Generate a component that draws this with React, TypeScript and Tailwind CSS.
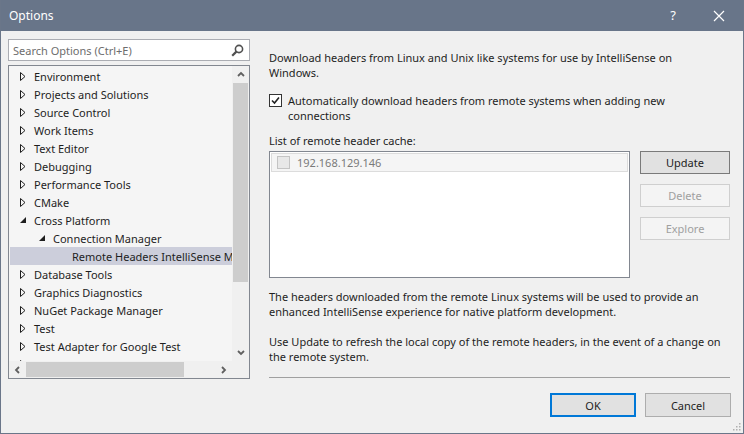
import React from 'react';

const font = "font-['Noto_Sans',sans-serif]";

type Node = { label: string; level: number; state: 'closed' | 'open' | 'leaf'; selected?: boolean };

const nodes: Node[] = [
  { label: 'Environment', level: 0, state: 'closed' },
  { label: 'Projects and Solutions', level: 0, state: 'closed' },
  { label: 'Source Control', level: 0, state: 'closed' },
  { label: 'Work Items', level: 0, state: 'closed' },
  { label: 'Text Editor', level: 0, state: 'closed' },
  { label: 'Debugging', level: 0, state: 'closed' },
  { label: 'Performance Tools', level: 0, state: 'closed' },
  { label: 'CMake', level: 0, state: 'closed' },
  { label: 'Cross Platform', level: 0, state: 'open' },
  { label: 'Connection Manager', level: 1, state: 'open' },
  { label: 'Remote Headers IntelliSense Manager', level: 2, state: 'leaf', selected: true },
  { label: 'Database Tools', level: 0, state: 'closed' },
  { label: 'Graphics Diagnostics', level: 0, state: 'closed' },
  { label: 'NuGet Package Manager', level: 0, state: 'closed' },
  { label: 'Test', level: 0, state: 'closed' },
  { label: 'Test Adapter for Google Test', level: 0, state: 'closed' },
  { label: 'Test Templates', level: 0, state: 'closed' },
];

const indent: Record<number, string> = { 0: 'pl-[10px]', 1: 'pl-[29px]', 2: 'pl-[48px]' };

function Arrow({ state }: { state: Node['state'] }) {
  if (state === 'closed')
    return (
      <svg width="6" height="9" viewBox="0 0 6 9">
        <path d="M0.5 0.5 L5 4.5 L0.5 8.5 Z" fill="none" stroke="#1e1e1e" strokeWidth="1" />
      </svg>
    );
  if (state === 'open')
    return (
      <svg width="7" height="7" viewBox="0 0 7 7">
        <path d="M6 0 L6 6 L0 6 Z" fill="#1e1e1e" />
      </svg>
    );
  return null;
}

function Chevron({ dir }: { dir: 'up' | 'down' | 'left' | 'right' }) {
  const d = {
    up: 'M1 5 L4 2 L7 5',
    down: 'M1 2 L4 5 L7 2',
    left: 'M5 1 L2 4 L5 7',
    right: 'M2 1 L5 4 L2 7',
  }[dir];
  return (
    <svg width="8" height="8" viewBox="0 0 8 8">
      <path d={d} fill="none" stroke="#606060" strokeWidth="1.8" />
    </svg>
  );
}

function Tree() {
  return (
    <div className="mt-[4px] flex h-[314px] w-[242px] flex-col border border-[#828790] bg-[#f0f0f0]">
      <div className="flex min-h-0 flex-1">
        <div className="flex-1 overflow-hidden bg-[#f5f5f5] pt-[1px]">
          {nodes.map((n) => (
            <div
              key={n.label}
              className={`ml-[1px] flex h-[18px] items-center whitespace-nowrap ${indent[n.level]} ${n.selected ? 'bg-[#cccedb]' : ''}`}
            >
              <span className="flex w-[14px] shrink-0 items-center">
                <Arrow state={n.state} />
              </span>
              <span className="text-[#1e1e1e]">{n.label}</span>
            </div>
          ))}
        </div>
        <div className="flex w-[17px] flex-col items-center">
          <div className="flex h-[17px] items-center justify-center">
            <Chevron dir="up" />
          </div>
          <div className="h-[199px] w-[15px] bg-[#cdcdcd]" />
          <div className="flex-1" />
          <div className="flex h-[17px] items-center justify-center">
            <Chevron dir="down" />
          </div>
        </div>
      </div>
      <div className="flex h-[17px] items-center">
        <div className="flex w-[17px] items-center justify-center">
          <Chevron dir="left" />
        </div>
        <div className="h-[15px] w-[158px] bg-[#cdcdcd]" />
        <div className="flex-1" />
        <div className="flex w-[17px] items-center justify-center">
          <Chevron dir="right" />
        </div>
        <div className="w-[17px]" />
      </div>
    </div>
  );
}

function Btn({ children, kind }: { children: React.ReactNode; kind: 'normal' | 'disabled' | 'default' | 'hot' }) {
  const cls = {
    normal: 'border border-[#adadad] bg-[#e1e1e1] text-[#1e1e1e]',
    hot: 'border border-[#7a7a7a] bg-[#e1e1e1] text-[#1e1e1e]',
    disabled: 'border border-[#cfcfcf] bg-[#f4f4f4] text-[#a0a0a0]',
    default: 'border-2 border-[#0078d7] bg-[#e1e1e1] text-[#1e1e1e]',
  }[kind];
  return <div className={`flex h-full items-center justify-center ${cls}`}>{children}</div>;
}

export default function App() {
  return (
    <div className={`relative flex h-[434px] w-[744px] flex-col overflow-hidden border-x border-b border-[#6a7689] bg-[#f0f0f0] text-[11px] leading-[15px] ${font}`}>
      <div className="flex h-[31px] shrink-0 items-center bg-[#687589] pl-[8px] text-[12px] text-white">
        <span>Options</span>
        <span className="ml-auto mr-[37px] text-[13px]">?</span>
        <svg className="mr-[18px]" width="12" height="12" viewBox="0 0 12 12">
          <path d="M1 1 L11 11 M11 1 L1 11" stroke="white" strokeWidth="1.2" />
        </svg>
      </div>

      <div className="flex flex-1">
        <div className="flex w-[250px] flex-col pl-[7px] pt-[8px]">
          <div className="flex h-[22px] w-[242px] items-center border border-[#abadb3] bg-white pl-[4px] pr-[5px]">
            <span className="text-[#6d6d6d]">Search Options (Ctrl+E)</span>
            <svg className="ml-auto" width="13" height="13" viewBox="0 0 13 13">
              <circle cx="8" cy="5" r="3.6" fill="none" stroke="#505050" strokeWidth="1.6" />
              <path d="M5.4 7.6 L1.2 11.8" stroke="#505050" strokeWidth="2.2" />
            </svg>
          </div>
          <Tree />
        </div>

        <div className="ml-[18px] flex w-[463px] flex-col whitespace-nowrap pt-[19px] text-[#1e1e1e]">
          <p>
            Download headers from Linux and Unix like systems for use by IntelliSense on
            <br />
            Windows.
          </p>

          <div className="mt-[13px] flex">
            <div className="mt-[1px] flex h-[13px] w-[13px] shrink-0 items-center justify-center border border-[#333333] bg-white">
              <svg width="9" height="9" viewBox="0 0 9 9">
                <path d="M1 4.5 L3.5 7 L8 1.5" fill="none" stroke="#222" strokeWidth="1.6" />
              </svg>
            </div>
            <p className="ml-[6px]">
              Automatically download headers from remote systems when adding new
              <br />
              connections
            </p>
          </div>

          <p className="mt-[10px]">List of remote header cache:</p>

          <div className="mt-[3px] flex">
            <div className="h-[127px] w-[361px] border border-[#828790] bg-white p-[1px]">
              <div className="flex h-[19px] items-center border border-[#dcdcdc] bg-[#f5f5f5] pl-[5px]">
                <div className="h-[13px] w-[13px] border border-[#c4c4c4] bg-[#e8e8e8]" />
                <span className="ml-[7px] text-[#7a7a7a]">192.168.129.146</span>
              </div>
            </div>
            <div className="ml-[10px] flex w-[90px] flex-col gap-[10px]">
              <div className="h-[23px]">
                <Btn kind="hot">Update</Btn>
              </div>
              <div className="h-[23px]">
                <Btn kind="disabled">Delete</Btn>
              </div>
              <div className="h-[23px]">
                <Btn kind="disabled">Explore</Btn>
              </div>
            </div>
          </div>

          <p className="mt-[11px]">
            The headers downloaded from the remote Linux systems will be used to provide an
            <br />
            enhanced IntelliSense experience for native platform development.
          </p>
          <p className="mt-[15px]">
            Use Update to refresh the local copy of the remote headers, in the event of a change on
            <br />
            the remote system.
          </p>

          <div className="mt-[13px] h-[2px] w-[461px] border-t border-[#a0a0a0] border-b-white" />

          <div className="mt-[14px] flex justify-end gap-[9px] pr-[1px]">
            <div className="h-[24px] w-[86px]">
              <Btn kind="default">OK</Btn>
            </div>
            <div className="h-[24px] w-[86px]">
              <Btn kind="normal">Cancel</Btn>
            </div>
          </div>
        </div>
      </div>

      <svg className="absolute bottom-[2px] right-[2px]" width="8" height="8" viewBox="0 0 8 8">
        <rect x="6" y="0" width="1.5" height="1.5" fill="#b0b0b0" />
        <rect x="3" y="3" width="1.5" height="1.5" fill="#b0b0b0" />
        <rect x="6" y="3" width="1.5" height="1.5" fill="#b0b0b0" />
        <rect x="0" y="6" width="1.5" height="1.5" fill="#b0b0b0" />
        <rect x="3" y="6" width="1.5" height="1.5" fill="#b0b0b0" />
        <rect x="6" y="6" width="1.5" height="1.5" fill="#b0b0b0" />
      </svg>
    </div>
  );
}
